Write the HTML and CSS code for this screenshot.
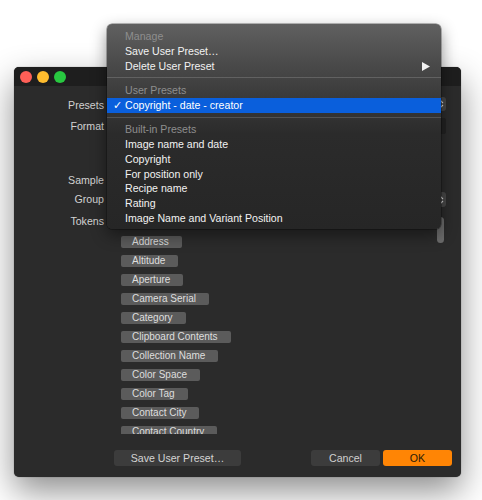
FILE: index.html
```html
<!DOCTYPE html>
<html>
<head>
<meta charset="utf-8">
<link rel="stylesheet" href="styles.css">
</head>
<body>
<div class="window">
  <div class="titlebar">
    <span class="light red"></span>
    <span class="light yellow"></span>
    <span class="light green"></span>
  </div>
  <div class="content">
    <div class="row r-presets">
      <div class="label">Presets</div>
      <div class="popup"><svg class="chev" width="6" height="10" viewBox="0 0 6 10"><path d="M1 4 L3 2 L5 4 M1 6 L3 8 L5 6" fill="none" stroke="#d8d8d8" stroke-width="1.1"/></svg></div>
    </div>
    <div class="row r-format">
      <div class="label">Format</div>
      <div class="field"></div>
    </div>
    <div class="row r-sample">
      <div class="label">Sample</div>
      <div class="ctl"></div>
    </div>
    <div class="row r-group">
      <div class="label">Group</div>
      <div class="popup"><svg class="chev" width="6" height="10" viewBox="0 0 6 10"><path d="M1 4 L3 2 L5 4 M1 6 L3 8 L5 6" fill="none" stroke="#d8d8d8" stroke-width="1.1"/></svg></div>
    </div>
    <div class="row r-tokens">
      <div class="label">Tokens</div>
      <div class="tokens">
        <span class="pill">Address</span>
        <span class="pill">Altitude</span>
        <span class="pill">Aperture</span>
        <span class="pill">Camera Serial</span>
        <span class="pill">Category</span>
        <span class="pill">Clipboard Contents</span>
        <span class="pill">Collection Name</span>
        <span class="pill">Color Space</span>
        <span class="pill">Color Tag</span>
        <span class="pill">Contact City</span>
        <span class="pill">Contact Country</span>
        <div class="scrollbar"></div>
      </div>
    </div>
    <div class="buttons">
      <button class="btn save">Save User Preset…</button>
      <div class="spacer"></div>
      <button class="btn cancel">Cancel</button>
      <button class="btn ok">OK</button>
    </div>
  </div>
</div>

<div class="menu">
  <div class="item header">Manage</div>
  <div class="item">Save User Preset…</div>
  <div class="item sub">Delete User Preset<svg class="arrow" width="8" height="9" viewBox="0 0 8 9"><path d="M0 0 L8 4.5 L0 9 Z" fill="#f2f2f2"/></svg></div>
  <div class="sep"></div>
  <div class="item header">User Presets</div>
  <div class="item selected"><span class="check">✓</span>Copyright - date - creator</div>
  <div class="sep"></div>
  <div class="item header">Built-in Presets</div>
  <div class="item">Image name and date</div>
  <div class="item">Copyright</div>
  <div class="item">For position only</div>
  <div class="item">Recipe name</div>
  <div class="item">Rating</div>
  <div class="item">Image Name and Variant Position</div>
</div>
</body>
</html>
```

FILE: styles.css
```css
html, body {
  margin: 0;
  padding: 0;
  background: #ffffff;
}
body {
  width: 482px;
  height: 500px;
  overflow: hidden;
  position: relative;
  font-family: "Liberation Sans", Arial, sans-serif;
  font-size: 10.6px;
}
.window {
  margin-left: 14px;
  margin-top: 67px;
  width: 447px;
  height: 410px;
  background: #2b2b2b;
  border-radius: 5px;
  box-shadow: 0 14px 34px rgba(0,0,0,0.45), 0 0 1px rgba(0,0,0,0.6);
  overflow: hidden;
  display: flex;
  flex-direction: column;
}
.titlebar {
  height: 19px;
  background: #1e1e1e;
  display: flex;
  align-items: center;
  padding-left: 6px;
  gap: 5px;
  flex: none;
}
.light {
  width: 12px;
  height: 12px;
  border-radius: 50%;
}
.red { background: #fe5f57; }
.yellow { background: #febc2e; }
.green { background: #28c840; }
.content {
  display: flex;
  flex-direction: column;
  padding-top: 11px;
}
.row {
  display: flex;
  gap: 6px;
  padding-right: 15px;
}
.label {
  width: 90px;
  flex: none;
  text-align: right;
  color: #d2d2d2;
  line-height: 14px;
  padding-top: 1px;
}
.r-presets { height: 14px; }
.r-format { height: 16px; margin-top: 7px; }
.r-sample { height: 14px; margin-top: 38px; }
.r-group { height: 15px; margin-top: 6px; }
.r-group .label { line-height: 15px; padding-top: 0; }
.r-tokens { height: 221px; margin-top: 6px; }
.popup {
  flex: 1;
  background: #474747;
  border-radius: 3px;
  display: flex;
  align-items: center;
  justify-content: flex-end;
  padding-right: 2px;
}
.field {
  flex: 1;
  background: #222222;
  border-radius: 2px;
}
.ctl { flex: 1; }
.tokens {
  flex: 1;
  position: relative;
  overflow: hidden;
  padding-top: 23px;
  padding-left: 11px;
  display: flex;
  flex-direction: column;
  align-items: flex-start;
  gap: 7px;
}
.pill {
  height: 12px;
  line-height: 12px;
  padding: 0 13px 0 11px;
  background: #5b5b5b;
  color: #dedede;
  font-size: 10px;
  border-radius: 2px;
  flex: none;
  white-space: nowrap;
}
.scrollbar {
  position: absolute;
  right: 2px;
  top: 4px;
  width: 7px;
  height: 26px;
  border-radius: 4px;
  background: #6b6b6b;
}
.buttons {
  display: flex;
  margin-top: 16px;
  height: 16px;
  padding-left: 100px;
  padding-right: 9px;
  gap: 3px;
}
.spacer { flex: 1; }
.btn {
  font-family: "Liberation Sans", Arial, sans-serif;
  font-size: 10.6px;
  border: none;
  border-radius: 3px;
  height: 16px;
  padding: 0;
  margin: 0;
}
.save {
  width: 127px;
  background: #3c3c3c;
  color: #d4d4d4;
}
.cancel {
  width: 69px;
  background: #3c3c3c;
  color: #d0d0d0;
}
.ok {
  width: 69px;
  background: #ff8505;
  color: #2a1a08;
}

.menu {
  position: absolute;
  left: 107px;
  top: 24px;
  width: 334px;
  height: 205px;
  box-sizing: border-box;
  padding-top: 5px;
  border-radius: 5px;
  background: linear-gradient(#606060 0px, #4a4a4a 40px, #393939 75px, #2b2b2b 110px, #262626 205px);
  box-shadow: 0 6px 16px rgba(0,0,0,0.45), 0 0 0 0.5px rgba(0,0,0,0.5);
  color: #f2f2f2;
}
.item {
  height: 14.8px;
  line-height: 14.8px;
  padding-left: 18px;
  position: relative;
  white-space: nowrap;
}
.header { color: #8e8e8e; }
.selected {
  background: #0a5fdc;
  color: #ffffff;
}
.check {
  position: absolute;
  left: 6px;
  top: 0;
}
.arrow {
  position: absolute;
  right: 11px;
  top: 3px;
}
.sep {
  height: 9.6px;
  position: relative;
}
.sep::after {
  content: "";
  position: absolute;
  left: 0;
  right: 0;
  top: 4px;
  height: 1px;
  background: rgba(255,255,255,0.16);
}
```
